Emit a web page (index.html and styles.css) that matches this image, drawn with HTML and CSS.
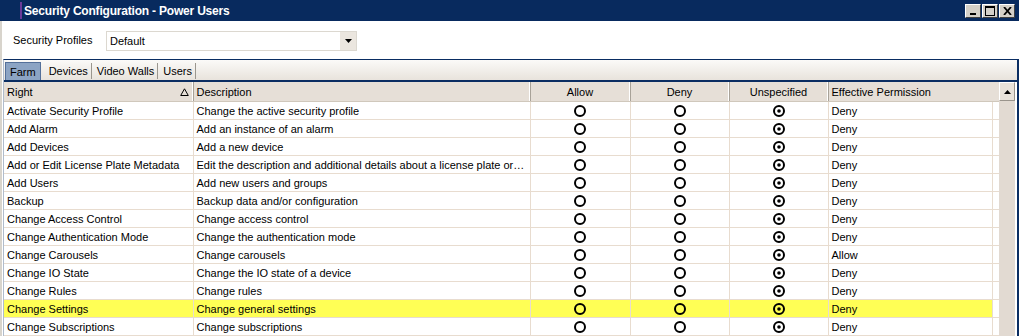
FILE: index.html
```html
<!DOCTYPE html>
<html lang="en">
<head>
    <meta charset="UTF-8">
    <title>Security Configuration - Power Users</title>
    <link rel="stylesheet" href="styles.css">
</head>
<body>
    <div class="window">
        <div class="titlebar">
            <span class="title-mark"></span>
            <span class="title">Security Configuration - Power Users</span>
            <div class="win-buttons">
                <span class="win-btn">
                    <svg width="8" height="8" viewBox="0 0 8 8"><rect x="1" y="6" width="6" height="2" fill="#000"/></svg>
                </span>
                <span class="win-btn">
                    <svg width="10" height="10" viewBox="0 0 10 10"><rect x="0.5" y="0.5" width="9" height="9" fill="none" stroke="#000"/><rect x="0" y="0" width="10" height="2" fill="#000"/></svg>
                </span>
                <span class="win-btn">
                    <svg width="9" height="8" viewBox="0 0 9 8"><path d="M1 0 L8 8 M8 0 L1 8" stroke="#000" stroke-width="1.8"/></svg>
                </span>
            </div>
        </div>

        <div class="profile-row">
            <label class="profile-label">Security Profiles</label>
            <div class="combo">
                <span class="combo-text">Default</span>
                <span class="combo-btn">
                    <svg width="7" height="4" viewBox="0 0 7 4"><path d="M0 0 H7 L3.5 4 Z" fill="#000"/></svg>
                </span>
            </div>
        </div>

        <div class="panel">
            <div class="tabs">
                <span class="tab active">Farm</span>
                <span class="tab">Devices</span>
                <span class="tab">Video Walls</span>
                <span class="tab">Users</span>
            </div>

            <div class="grid-wrap">
                <table class="grid">
                    <colgroup>
                        <col style="width:189px">
                        <col style="width:337px">
                        <col style="width:100px">
                        <col style="width:99px">
                        <col style="width:99px">
                        <col style="width:164px">
                        <col style="width:7px">
                    </colgroup>
                    <thead>
                        <tr>
                            <th class="left">Right<svg class="sort" width="9" height="8" viewBox="0 0 9 8"><path d="M4.5 0.8 L8.3 7.5 H0.7 Z" fill="none" stroke="#000" stroke-width="1"/></svg></th>
                            <th class="left">Description</th>
                            <th>Allow</th>
                            <th>Deny</th>
                            <th>Unspecified</th>
                            <th class="left" colspan="2">Effective Permission</th>
                        </tr>
                    </thead>
                    <tbody id="rows"></tbody>
                </table>
                <div class="scrollbar">
                    <span class="scroll-btn">
                        <svg width="7" height="4" viewBox="0 0 7 4"><path d="M0 4 H7 L3.5 0 Z" fill="#000"/></svg>
                    </span>
                    <div class="scroll-track"></div>
                </div>
            </div>
        </div>
    </div>

    <script>
        const rights = [
            ['Activate Security Profile', 'Change the active security profile', 'Deny'],
            ['Add Alarm', 'Add an instance of an alarm', 'Deny'],
            ['Add Devices', 'Add a new device', 'Deny'],
            ['Add or Edit License Plate Metadata', 'Edit the description and additional details about a license plate or\u2026', 'Deny'],
            ['Add Users', 'Add new users and groups', 'Deny'],
            ['Backup', 'Backup data and/or configuration', 'Deny'],
            ['Change Access Control', 'Change access control', 'Deny'],
            ['Change Authentication Mode', 'Change the authentication mode', 'Deny'],
            ['Change Carousels', 'Change carousels', 'Allow'],
            ['Change IO State', 'Change the IO state of a device', 'Deny'],
            ['Change Rules', 'Change rules', 'Deny'],
            ['Change Settings', 'Change general settings', 'Deny'],
            ['Change Subscriptions', 'Change subscriptions', 'Deny']
        ];

        const radio = '<svg width="12" height="12" viewBox="0 0 12 12"><circle cx="6" cy="6" r="5" fill="none" stroke="#000" stroke-width="2"/></svg>';
        const radioOn = '<svg width="12" height="12" viewBox="0 0 12 12"><circle cx="6" cy="6" r="5" fill="none" stroke="#000" stroke-width="2"/><circle cx="6" cy="6" r="1.8" fill="#000"/></svg>';

        const body = document.getElementById('rows');
        rights.forEach(function (r) {
            const tr = document.createElement('tr');
            if (r[0] === 'Change Settings') tr.className = 'selected';
            tr.innerHTML =
                '<td>' + r[0] + '</td>' +
                '<td>' + r[1] + '</td>' +
                '<td class="radio">' + radio + '</td>' +
                '<td class="radio">' + radio + '</td>' +
                '<td class="radio">' + radioOn + '</td>' +
                '<td>' + r[2] + '</td>' +
                '<td class="filler"></td>';
            body.appendChild(tr);
        });
    </script>
</body>
</html>
```

FILE: styles.css
```css
/* Janela estilo Windows classico */
body {
    margin: 0;
    background: #fff;
    font-family: "Liberation Sans", Arial, sans-serif;
    font-size: 11px;
    color: #000;
    overflow: hidden;
}
.window {
    width: 1019px;
    height: 336px;
    border-left: 2px solid #d8d4cc;
    box-sizing: border-box;
    background: #fff;
}
.titlebar {
    height: 21px;
    margin-left: -2px;
    background: #082a5e;
    display: flex;
    align-items: center;
    padding-left: 20px;
}
.title-mark {
    width: 2px;
    height: 17px;
    background: #6a3a9a;
    margin-right: 2px;
}
.title {
    color: #fff;
    font-weight: bold;
    font-size: 12px;
    letter-spacing: -0.2px;
}
.win-buttons {
    margin-left: auto;
    margin-right: 4px;
    display: flex;
}
.win-btn {
    width: 14px;
    height: 12px;
    background: #d4d0c8;
    border: 1px solid;
    border-color: #fff #404040 #404040 #fff;
    display: flex;
    align-items: center;
    justify-content: center;
    margin-left: 1px;
}
.profile-row {
    height: 38px;
    display: flex;
    align-items: center;
    padding-left: 11px;
}
.profile-label {
    width: 93px;
    white-space: nowrap;
}
.combo {
    width: 249px;
    height: 18px;
    border: 1px solid #dcd8d0;
    display: flex;
    align-items: center;
    margin-top: 1px;
}
.combo-text {
    flex: 1;
    padding-left: 3px;
}
.combo-btn {
    width: 16px;
    height: 18px;
    background: #ebe6df;
    display: flex;
    align-items: center;
    justify-content: center;
}
.panel {
    margin-left: 1px;
    border-top: 1px solid #0a2d62;
    border-left: 1px solid #b0bccc;
    border-right: 2px solid #0a2d62;
    height: 277px;
    box-sizing: border-box;
}
.tabs {
    height: 22px;
    background: linear-gradient(#fbfaf8, #e8e3dc);
    border-bottom: 2px solid #0a2d62;
    display: flex;
    align-items: flex-end;
    padding-left: 1px;
    box-sizing: border-box;
}
.tab {
    height: 16px;
    line-height: 16px;
    padding: 0 3px 0 4px;
    border-right: 1px solid #9a968e;
    margin-bottom: 1px;
    margin-right: 1px;
}
.tab.active {
    background: #8ca4c4;
    border: 1px solid #54709a;
    border-bottom: none;
    padding: 0 4px;
    height: 17px;
    line-height: 18px;
    margin-bottom: 0;
    margin-right: 4px;
}
.grid-wrap {
    display: flex;
}
.grid {
    border-collapse: collapse;
    table-layout: fixed;
    width: 995px;
}
.grid th {
    height: 19px;
    padding: 0 3px;
    font-weight: normal;
    text-align: center;
    white-space: nowrap;
    background: #e6dfd7;
    border-bottom: 1px solid #d0c8bc;
    border-right: 1px solid #a8a298;
    box-shadow: inset -1px 0 0 #fff;
    position: relative;
}
.grid th.left {
    text-align: left;
}
.grid th:last-child {
    border-right: none;
    box-shadow: none;
}
.sort {
    position: absolute;
    right: 4px;
    top: 6px;
}
.grid td {
    height: 17px;
    padding: 0 3px;
    border-bottom: 1px solid #e8dccf;
    border-right: 1px solid #e8dccf;
    white-space: nowrap;
    overflow: hidden;
}
.grid td.radio {
    text-align: center;
    padding: 0;
    line-height: 0;
}
.grid td.filler {
    border-right: none;
}
.grid tr.selected td {
    background: #ffff55;
}
.grid tr.selected td.filler {
    background: #fff;
}
.scrollbar {
    width: 16px;
    display: flex;
    flex-direction: column;
}
.scroll-btn {
    height: 17px;
    background: #e8e2da;
    border: 1px solid;
    border-color: #fff #9a948c #9a948c #fff;
    display: flex;
    align-items: center;
    justify-content: center;
}
.scroll-track {
    flex: 1;
    background: #e2dad2;
    height: 240px;
}
```
